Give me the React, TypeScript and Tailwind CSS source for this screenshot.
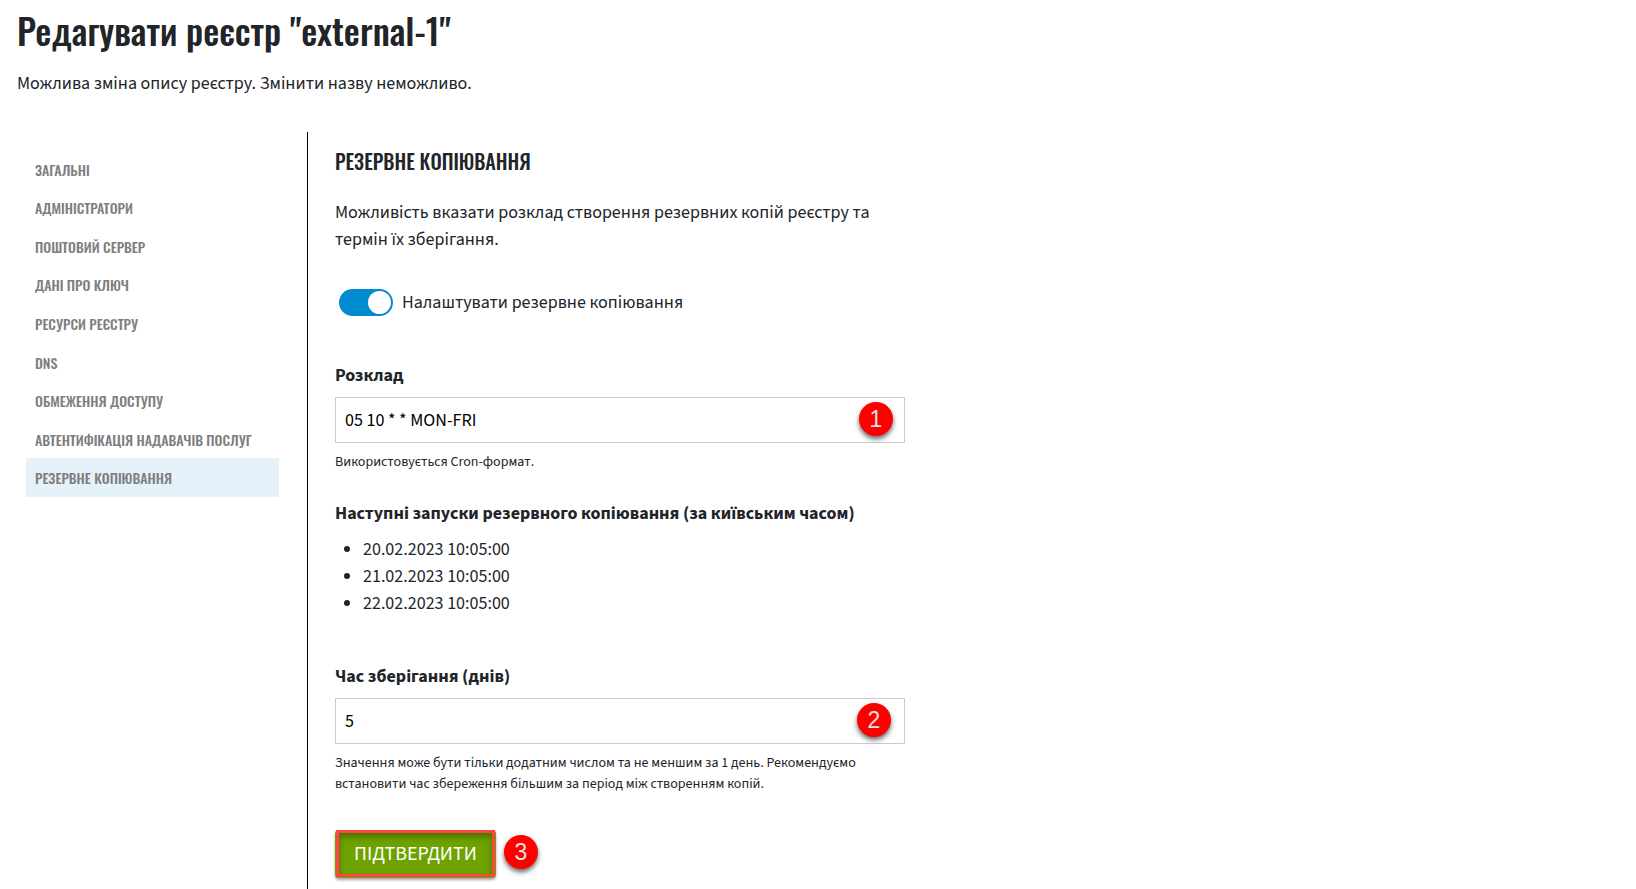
import { useState } from "react";

const NAV = [
  "Загальні",
  "Адміністратори",
  "Поштовий сервер",
  "Дані про ключ",
  "Ресурси реєстру",
  "DNS",
  "Обмеження доступу",
  "Автентифікація надавачів послуг",
  "Резервне копіювання",
];

const NEXT_RUNS = ["20.02.2023 10:05:00", "21.02.2023 10:05:00", "22.02.2023 10:05:00"];

function Marker({ n }: { n: number }) {
  return (
    <span className="flex size-[34px] items-center justify-center rounded-full bg-[#fe0000] font-['Liberation_Sans',sans-serif] text-[23px] leading-none text-[#e2e2e2] shadow-[0_3px_5px_rgba(0,0,0,0.6)]">
      {n}
    </span>
  );
}

function Field({ id, label, value, marker, children }: {
  id: string;
  label: string;
  value: string;
  marker: React.ReactNode;
  children: React.ReactNode;
}) {
  return (
    <div>
      <label htmlFor={id} className="block font-bold leading-[27px]">{label}</label>
      <div className="relative mt-2">
        <input
          id={id}
          defaultValue={value}
          className="block h-[46px] w-full border border-[#cccada] bg-white px-[9px] text-black outline-none"
        />
        {marker}
      </div>
      <p className="mt-[9px] text-[14px] leading-[21px]">{children}</p>
    </div>
  );
}

export default function App() {
  const [enabled, setEnabled] = useState(true);
  return (
    <main className="bg-white pl-[17px] font-['Source_Sans_3','Source_Sans_Pro','Noto_Sans',sans-serif] text-[18px] text-[#212529]">
      <h1 className="pt-1 font-['Oswald',sans-serif] text-[36px] font-medium leading-[52px]">
        Редагувати реєстр "external-1"
      </h1>
      <p className="mt-[14px] leading-[27px]">Можлива зміна опису реєстру. Змінити назву неможливо.</p>

      <div className="mt-[35px] flex">
        <nav className="w-[290px] shrink-0 pl-[9px] pr-7 pt-[18px]">
          <ul className="grid h-[347px] auto-rows-fr font-['Oswald',sans-serif] text-[14px] font-medium uppercase text-[#7e7e7e]">
            {NAV.map((item, i) => (
              <li key={item} className="grid">
                <a
                  href="#"
                  aria-current={i === 8 ? "page" : undefined}
                  className="flex items-center whitespace-nowrap px-[9px] aria-[current=page]:bg-[#e5f2fa]"
                >
                  {item}
                </a>
              </li>
            ))}
          </ul>
        </nav>

        <form className="min-w-0 grow border-l border-black pb-3 pl-[27px]" onSubmit={(e) => e.preventDefault()}>
          <div className="max-w-[570px]">
            <h2 className="pt-3 font-['Oswald',sans-serif] text-[20px] font-medium uppercase leading-[34px]">
              Резервне копіювання
            </h2>
            <p className="mt-[21px] leading-[27px]">
              Можливість вказати розклад створення резервних копій реєстру та термін їх зберігання.
            </p>

            <label className="mt-9 flex items-center gap-[9px] pl-1 leading-[27px]">
              <input
                type="checkbox"
                role="switch"
                checked={enabled}
                onChange={(e) => setEnabled(e.target.checked)}
                className="peer sr-only"
              />
              <span className="flex h-[27px] w-[54px] items-center rounded-full bg-gray-300 p-[2px] peer-checked:justify-end peer-checked:bg-[#008bd0]">
                <span className="size-[23px] rounded-full bg-white" />
              </span>
              Налаштувати резервне копіювання
            </label>

            <div className="mt-[46px]">
              <Field
                id="schedule"
                label="Розклад"
                value="05 10 * * MON-FRI"
                marker={<span className="absolute right-3 top-[5px]"><Marker n={1} /></span>}
              >
                Використовується Cron-формат.
              </Field>
            </div>

            <h3 className="mt-[27px] font-bold leading-[27px]">Наступні запуски резервного копіювання (за київським часом)</h3>
            <ul className="mt-[9px] list-disc pl-7 leading-[27px]">
              {NEXT_RUNS.map((run) => (
                <li key={run}>{run}</li>
              ))}
            </ul>

            <div className="mt-[46px]">
              <Field
                id="retention"
                label="Час зберігання (днів)"
                value="5"
                marker={<span className="absolute right-[14px] top-[5px]"><Marker n={2} /></span>}
              >
                Значення може бути тільки додатним числом та не меншим за 1 день. Рекомендуємо встановити час збереження більшим за період між створенням копій.
              </Field>
            </div>

            <div className="mt-[35px] flex items-start gap-2">
              <button
                type="submit"
                className="relative h-12 rounded-sm bg-[#6ea200] px-[19px] text-[20px] uppercase text-white shadow-[0_2px_3px_rgba(0,0,0,0.35)]"
              >
                Підтвердити
                <span className="absolute inset-x-px bottom-px top-0 border-3 border-[#ff4444] shadow-[inset_0_4px_6px_rgba(0,0,0,0.3)]" />
              </button>
              <span className="pt-[5px]"><Marker n={3} /></span>
            </div>
          </div>
        </form>
      </div>
    </main>
  );
}
